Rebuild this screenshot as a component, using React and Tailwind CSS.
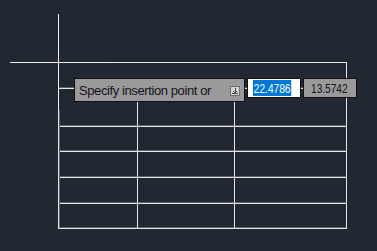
import React from 'react';

const LINE = '#e4e6e8';

// table grid in drawing coordinates
const rows = [62, 88, 126, 151, 177, 203, 228];
const cols = [137, 234];
const left = 58;
const right = 346;

const Drawing = () => (
  <svg width="377" height="251" className="block" shapeRendering="crispEdges">
    {/* table */}
    {rows.map((y) => (
      <line key={'r' + y} x1={left} y1={y + 0.5} x2={right + 1} y2={y + 0.5} stroke={LINE} strokeWidth="1" />
    ))}
    {rows.slice(1).map((y) => (
      <line key={'g' + y} x1={left + 1} y1={y - 0.5} x2={right} y2={y - 0.5} stroke="#5c6168" strokeWidth="1" />
    ))}
    <line x1={left + 0.5} y1={62} x2={left + 0.5} y2={229} stroke={LINE} strokeWidth="1" />
    <line x1={left + 1.5} y1={110} x2={left + 1.5} y2={228} stroke="#5c6168" strokeWidth="1" />
    <line x1={right + 0.5} y1={62} x2={right + 0.5} y2={229} stroke={LINE} strokeWidth="1" />
    {cols.map((x) => (
      <line key={'c' + x} x1={x + 0.5} y1={88} x2={x + 0.5} y2={228} stroke={LINE} strokeWidth="1" />
    ))}
    {/* crosshair */}
    <line x1="10" y1="62.5" x2="107" y2="62.5" stroke="#f2f2f2" strokeWidth="1" />
    <line x1="58.5" y1="14" x2="58.5" y2="110" stroke="#f2f2f2" strokeWidth="1" />
  </svg>
);

const DownIcon = () => (
  <svg width="10" height="10" viewBox="0 0 10 10" shapeRendering="crispEdges">
    <rect x="0.5" y="0.5" width="9" height="9" fill="#d2d2d2" stroke="#6e6e6e" />
    <line x1="5" y1="2" x2="5" y2="7" stroke="#4a4a4a" />
    <line x1="3" y1="5" x2="5" y2="7" stroke="#4a4a4a" shapeRendering="auto" />
    <line x1="7" y1="5" x2="5" y2="7" stroke="#4a4a4a" shapeRendering="auto" />
    <line x1="2" y1="7.5" x2="8" y2="7.5" stroke="#4a4a4a" />
  </svg>
);

const DynamicInput = () => (
  <div className="absolute left-[74px] top-[78px] flex items-start" style={{ fontFamily: '"Liberation Sans", Arial, sans-serif' }}>
    <div className="flex h-[24px] w-[171px] items-center justify-between border border-[#111] bg-[#9a9a9a] pl-[4px] pr-[4px]">
      <span className="text-[13px] leading-none tracking-[-0.4px] text-[#16121c]">Specify insertion point or</span>
      <span className="mt-[2px] flex">
        <DownIcon />
      </span>
    </div>
    <div className="mt-[10px] h-px w-[2px] bg-[#e4e6e8]" />
    <div className="flex h-[20px] w-[54px] items-center overflow-hidden border border-[#111] bg-white pl-[5px]">
      <span className="inline-block origin-left scale-x-[0.78] bg-[#0078d7] px-[1px] py-[1.5px] text-[13px] leading-none whitespace-nowrap text-white">22.4786</span>
    </div>
    <div className="mt-[10px] h-px w-[2px] bg-[#e4e6e8]" />
    <div className="flex h-[20px] w-[54px] items-center overflow-hidden border border-[#111] bg-[#9a9a9a] pl-[7px]">
      <span className="inline-block origin-left scale-x-[0.78] text-[13px] leading-none whitespace-nowrap text-[#16121c]">13.5742</span>
    </div>
  </div>
);

export default function App() {
  return (
    <div className="relative h-[251px] w-[377px] overflow-hidden bg-[#222831]">
      <Drawing />
      <DynamicInput />
    </div>
  );
}
